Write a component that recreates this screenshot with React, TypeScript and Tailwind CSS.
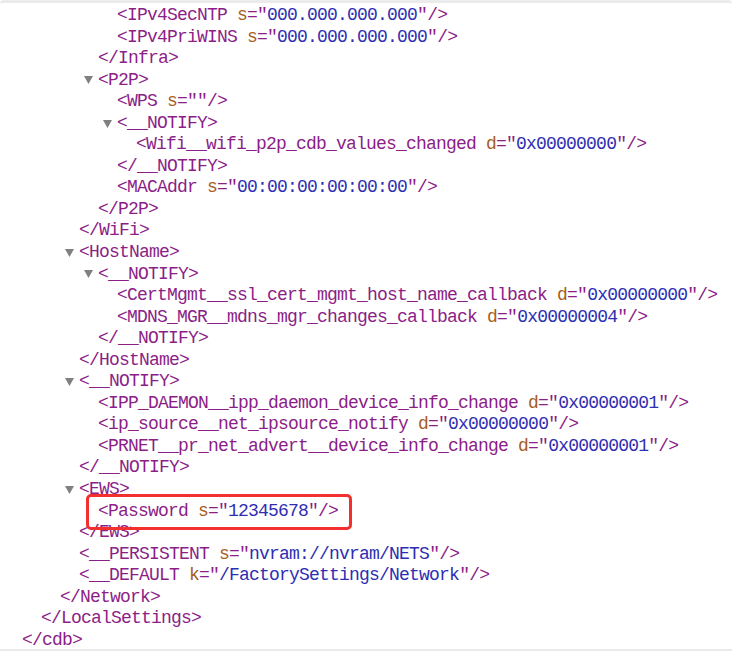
type XNode = {
  tag: string
  attrs?: [string, string][]
  children?: XNode[]
  hideOpen?: boolean
}

const tree: XNode = {
  tag: "cdb",
  hideOpen: true,
  children: [
    {
      tag: "LocalSettings",
      hideOpen: true,
      children: [
        {
          tag: "Network",
          hideOpen: true,
          children: [
            {
              tag: "WiFi",
              hideOpen: true,
              children: [
                {
                  tag: "Infra",
                  hideOpen: true,
                  children: [
                    { tag: "IPv4SecNTP", attrs: [["s", "000.000.000.000"]] },
                    { tag: "IPv4PriWINS", attrs: [["s", "000.000.000.000"]] },
                  ],
                },
                {
                  tag: "P2P",
                  children: [
                    { tag: "WPS", attrs: [["s", ""]] },
                    {
                      tag: "__NOTIFY",
                      children: [{ tag: "Wifi__wifi_p2p_cdb_values_changed", attrs: [["d", "0x00000000"]] }],
                    },
                    { tag: "MACAddr", attrs: [["s", "00:00:00:00:00:00"]] },
                  ],
                },
              ],
            },
            {
              tag: "HostName",
              children: [
                {
                  tag: "__NOTIFY",
                  children: [
                    { tag: "CertMgmt__ssl_cert_mgmt_host_name_callback", attrs: [["d", "0x00000000"]] },
                    { tag: "MDNS_MGR__mdns_mgr_changes_callback", attrs: [["d", "0x00000004"]] },
                  ],
                },
              ],
            },
            {
              tag: "__NOTIFY",
              children: [
                { tag: "IPP_DAEMON__ipp_daemon_device_info_change", attrs: [["d", "0x00000001"]] },
                { tag: "ip_source__net_ipsource_notify", attrs: [["d", "0x00000000"]] },
                { tag: "PRNET__pr_net_advert__device_info_change", attrs: [["d", "0x00000001"]] },
              ],
            },
            {
              tag: "EWS",
              children: [{ tag: "Password", attrs: [["s", "12345678"]] }],
            },
            { tag: "__PERSISTENT", attrs: [["s", "nvram://nvram/NETS"]] },
            { tag: "__DEFAULT", attrs: [["k", "/FactorySettings/Network"]] },
          ],
        },
      ],
    },
  ],
}

function Triangle() {
  return (
    <span className="inline-flex w-[15px] -ml-[15px] items-center">
      <svg width="10" height="9" viewBox="0 0 10 9" className="ml-[1px] mt-[1px]">
        <polygon points="0,0 9,0 4.5,8" fill="#808080" />
      </svg>
    </span>
  )
}

function Line({ node }: { node: XNode }) {
  const boxed = node.tag === "Password"
  return (
    <div className="relative whitespace-pre">
      <span className="text-[#8b1e87]">{"<" + node.tag}</span>
      {node.attrs?.map(([k, v]) => (
        <span key={k}>
          <span> </span>
          <span className="text-[#a65d1e]">{k}</span>
          <span className="text-[#8b1e87]">="</span>
          <span className="text-[#2e2eb2]">{v}</span>
          <span className="text-[#8b1e87]">"</span>
        </span>
      ))}
      <span className="text-[#8b1e87]">/&gt;</span>
      {boxed && (
        <div className="absolute -top-[7px] -left-[12px] w-[266px] h-[36px] border-[3px] border-[#f42f2f] rounded-[5px]" />
      )}
    </div>
  )
}

function Element({ node }: { node: XNode }) {
  if (!node.children) return <Line node={node} />
  return (
    <div>
      {!node.hideOpen && (
        <div className="flex items-center whitespace-pre">
          <Triangle />
          <span className="text-[#8b1e87]">{"<" + node.tag + ">"}</span>
        </div>
      )}
      <div className="ml-[19px]">
        {node.children.map((c, i) => (
          <Element key={c.tag + i} node={c} />
        ))}
      </div>
      <div className="whitespace-pre text-[#8b1e87]">{"</" + node.tag + ">"}</div>
    </div>
  )
}

export default function App() {
  return (
    <div className="w-[732px] h-[651px] bg-white overflow-hidden border-t-[3px] border-b-[2px] border-[#ebebeb] rounded-t-[4px]">
      <div
        className="pl-[22px] pt-[2px] text-[18px] leading-[21.55px] tracking-[-0.8px]"
        style={{ fontFamily: '"Liberation Mono", "DejaVu Sans Mono", monospace' }}
      >
        <Element node={tree} />
      </div>
    </div>
  )
}
